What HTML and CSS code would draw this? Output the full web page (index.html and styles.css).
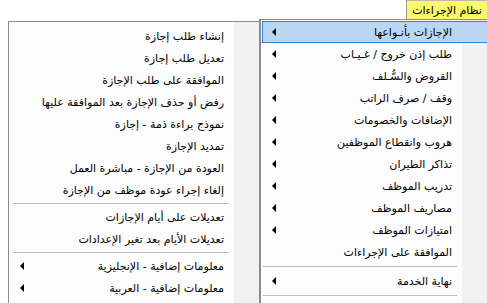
FILE: index.html
```html
<!DOCTYPE html>
<html lang="ar">
<head>
<meta charset="utf-8">
<link rel="stylesheet" href="styles.css">
</head>
<body>
<div class="menubar">
  <div class="tab" dir="rtl">نظام الإجراءات</div>
</div>

<div class="menu main-menu" dir="rtl">
  <div class="item hot"><span class="label">الإجازات بأنـواعها</span><span class="arrow"></span></div>
  <div class="item"><span class="label">طلب إذن خروج / غـيـاب</span><span class="arrow"></span></div>
  <div class="item"><span class="label">القروض والسُّـلف</span><span class="arrow"></span></div>
  <div class="item"><span class="label">وقف / صرف الراتب</span><span class="arrow"></span></div>
  <div class="item"><span class="label">الإضافات والخصومات</span><span class="arrow"></span></div>
  <div class="item"><span class="label">هروب وانقطاع الموظفين</span><span class="arrow"></span></div>
  <div class="item"><span class="label">تذاكر الطيران</span><span class="arrow"></span></div>
  <div class="item"><span class="label">تدريب الموظف</span><span class="arrow"></span></div>
  <div class="item"><span class="label">مصاريف الموظف</span><span class="arrow"></span></div>
  <div class="item"><span class="label">امتيازات الموظف</span><span class="arrow"></span></div>
  <div class="item"><span class="label">الموافقة على الإجراءات</span></div>
  <div class="sep"></div>
  <div class="item"><span class="label">نهاية الخدمة</span><span class="arrow"></span></div>
  <div class="sep"></div>
</div>

<div class="menu sub-menu" dir="rtl">
  <div class="item"><span class="label">إنشاء طلب إجازة</span></div>
  <div class="item"><span class="label">تعديل طلب إجازة</span></div>
  <div class="item"><span class="label">الموافقة على طلب الإجازة</span></div>
  <div class="item"><span class="label">رفض أو حذف الإجازة بعد الموافقة عليها</span></div>
  <div class="item"><span class="label">نموذج براءة ذمة - إجازة</span></div>
  <div class="item"><span class="label">تمديد الإجازة</span></div>
  <div class="item"><span class="label">العودة من الإجازة - مباشرة العمل</span></div>
  <div class="item"><span class="label">إلغاء إجراء عودة موظف من الإجازة</span></div>
  <div class="sep"></div>
  <div class="item"><span class="label">تعديلات على أيام الإجازات</span></div>
  <div class="item"><span class="label">تعديلات الأيام بعد تغير الإعدادات</span></div>
  <div class="sep"></div>
  <div class="item"><span class="label">معلومات إضافية - الإنجليزية</span><span class="arrow"></span></div>
  <div class="item"><span class="label">معلومات إضافية - العربية</span><span class="arrow"></span></div>
</div>
</body>
</html>
```

FILE: styles.css
```css
html, body {
  margin: 0;
  padding: 0;
  background: #ffffff;
  width: 487px;
  height: 303px;
  overflow: hidden;
  position: relative;
  font-family: "DejaVu Sans", "Noto Sans", sans-serif;
  font-size: 11px;
  color: #000;
}

.menubar {
  display: flex;
  justify-content: flex-end;
  height: 19px;
}

.tab {
  width: 81px;
  height: 19px;
  box-sizing: border-box;
  background: #fbf86a;
  border-left: 1px solid #9a9a9a;
  border-top: 1px solid #b8b8b8;
  display: flex;
  align-items: center;
  justify-content: center;
  line-height: 1;
}

.menu {
  position: absolute;
  box-sizing: border-box;
  background: #fcfcfc;
  border: 1px solid #8c8c8c;
  border-bottom: none;
  overflow: hidden;
}

.main-menu {
  left: 259px;
  top: 19px;
  width: 228px;
  height: 284px;
  padding: 1px 0 0 1px;
  border-left: 2px solid #8a8a8a;
  border-right: none;
  background: linear-gradient(to left, #f1f1f1 25px, #fcfcfc 25px);
}

.sub-menu {
  left: 8px;
  top: 21px;
  width: 252px;
  height: 282px;
  padding: 3px 2px 0;
  background: linear-gradient(to left, #f1f1f1 25px, #fcfcfc 25px);
}

.item {
  height: 22px;
  display: flex;
  align-items: center;
  justify-content: space-between;
  box-sizing: border-box;
  border: 1px solid transparent;
  white-space: nowrap;
}

.main-menu .item {
  border-right-width: 0;
  padding-right: 35px;
  padding-left: 9px;
}

.sub-menu .item {
  padding-right: 32px;
  padding-left: 8px;
}

.item.hot {
  background: #b9d7f2;
  border-color: #3185d6;
}

.arrow {
  width: 0;
  height: 0;
  border-top: 4px solid transparent;
  border-bottom: 4px solid transparent;
  border-right: 4px solid #000;
}

.sep {
  height: 7px;
  display: flex;
  align-items: center;
  padding: 0 2px;
}

.main-menu .sep {
  padding-right: 30px;
  padding-left: 1px;
}

.sub-menu .sep {
  padding-right: 28px;
  height: 5px;
}

.sep::before {
  content: "";
  flex: 1;
  height: 1px;
  background: #bdbdbd;
}
```
